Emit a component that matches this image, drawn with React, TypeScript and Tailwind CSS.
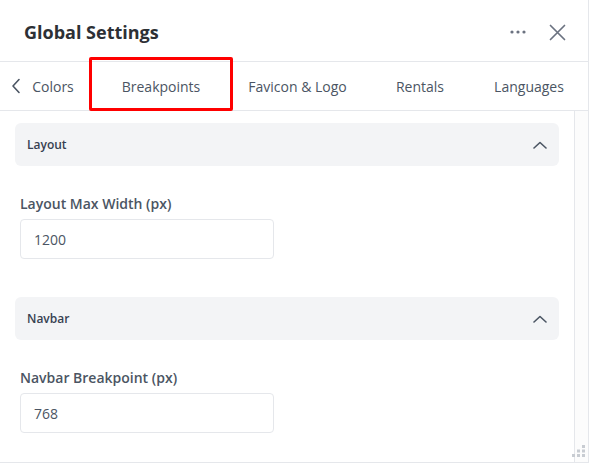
import React from "react";

const font = { fontFamily: '"Open Sans", "Noto Sans", sans-serif' };

function ChevronUp() {
  return (
    <svg width="14" height="8" viewBox="0 0 14 8" fill="none">
      <path d="M1 7L7 1.5L13 7" stroke="#4b5563" strokeWidth="1.6" strokeLinecap="round" strokeLinejoin="round" />
    </svg>
  );
}

function Section({ title, label, value }: { title: string; label: string; value: string }) {
  return (
    <div className="flex flex-col">
      <div className="h-[43px] rounded-md bg-[#f3f4f6] flex items-center justify-between pl-3 pr-[12px]">
        <span className="text-[12px] font-semibold text-[#374151]">{title}</span>
        <ChevronUp />
      </div>
      <div className="pl-[5px] pt-[28px]">
        <div className="text-[14px] leading-[20px] font-semibold text-[#4b5563]">{label}</div>
        <div className="mt-[5px] w-[254px] h-[40px] rounded border border-[#e5e7eb] flex items-center pl-[13px] text-[14px] text-[#4b5563]">
          {value}
        </div>
      </div>
    </div>
  );
}

export default function App() {
  const tabs: { name: string; w: string }[] = [
    { name: "Colors", w: "w-[90px]" },
    { name: "Breakpoints", w: "w-[126px]" },
    { name: "Favicon & Logo", w: "w-[147px]" },
    { name: "Rentals", w: "w-[98px]" },
    { name: "Languages", w: "w-[120px]" },
  ];
  return (
    <div style={font} className="w-[589px] h-[463px] bg-white border-b border-r border-[#e5e7eb] flex flex-col overflow-hidden relative">
      <div className="h-[62px] shrink-0 flex items-center justify-between pl-6 pr-[22px] pt-[3px] border-b border-[#e5e7eb]">
        <span className="text-[18px] font-bold text-[#2d3035]">Global Settings</span>
        <div className="flex items-center gap-[23px]">
          <svg width="16" height="4" viewBox="0 0 16 4">
            <circle cx="2" cy="2" r="1.6" fill="#6b7280" />
            <circle cx="8" cy="2" r="1.6" fill="#6b7280" />
            <circle cx="14" cy="2" r="1.6" fill="#6b7280" />
          </svg>
          <svg width="17" height="17" viewBox="0 0 17 17">
            <path d="M1.5 1.5L15.5 15.5M15.5 1.5L1.5 15.5" stroke="#6b7280" strokeWidth="1.7" strokeLinecap="round" />
          </svg>
        </div>
      </div>
      <div className="h-[49px] shrink-0 border-b border-[#e5e7eb] flex items-center pl-2 relative">
        {tabs.map((t) => (
          <div key={t.name} className={`${t.w} shrink-0 h-full flex items-center justify-center relative text-[14px] text-[#4b5563] whitespace-nowrap`}>
            {t.name}
            {t.name === "Breakpoints" && (
              <div className="absolute left-[-9px] right-[-9px] top-[-5px] bottom-[-1px] border-[3px] border-[#ff0000] rounded-[2px]" />
            )}
          </div>
        ))}
        <div className="absolute left-[11px] top-0 h-full flex items-center">
          <svg width="10" height="16" viewBox="0 0 10 16" fill="none">
            <path d="M8 1.5L2 8L8 14.5" stroke="#4b5563" strokeWidth="1.6" strokeLinecap="round" strokeLinejoin="round" />
          </svg>
        </div>
      </div>
      <div className="flex flex-1 min-h-0">
        <div className="flex-1 pl-[15px] pr-[15px] pt-[12px] flex flex-col gap-[38px]">
          <Section title="Layout" label="Layout Max Width (px)" value="1200" />
          <Section title="Navbar" label="Navbar Breakpoint (px)" value="768" />
        </div>
        <div className="w-[14px] shrink-0 border-l border-[#e5e7eb] bg-[#fcfcfc]" />
      </div>
      <svg className="absolute right-[2px] bottom-[4px]" width="14" height="14" viewBox="0 0 14 14">
        <rect x="10" y="1" width="3" height="3" fill="#c8ccd2" />
        <rect x="5" y="5.5" width="3" height="3" fill="#c8ccd2" />
        <rect x="10" y="5.5" width="3" height="3" fill="#c8ccd2" />
        <rect x="0" y="10" width="3" height="3" fill="#c8ccd2" />
        <rect x="5" y="10" width="3" height="3" fill="#c8ccd2" />
        <rect x="10" y="10" width="3" height="3" fill="#c8ccd2" />
      </svg>
    </div>
  );
}
